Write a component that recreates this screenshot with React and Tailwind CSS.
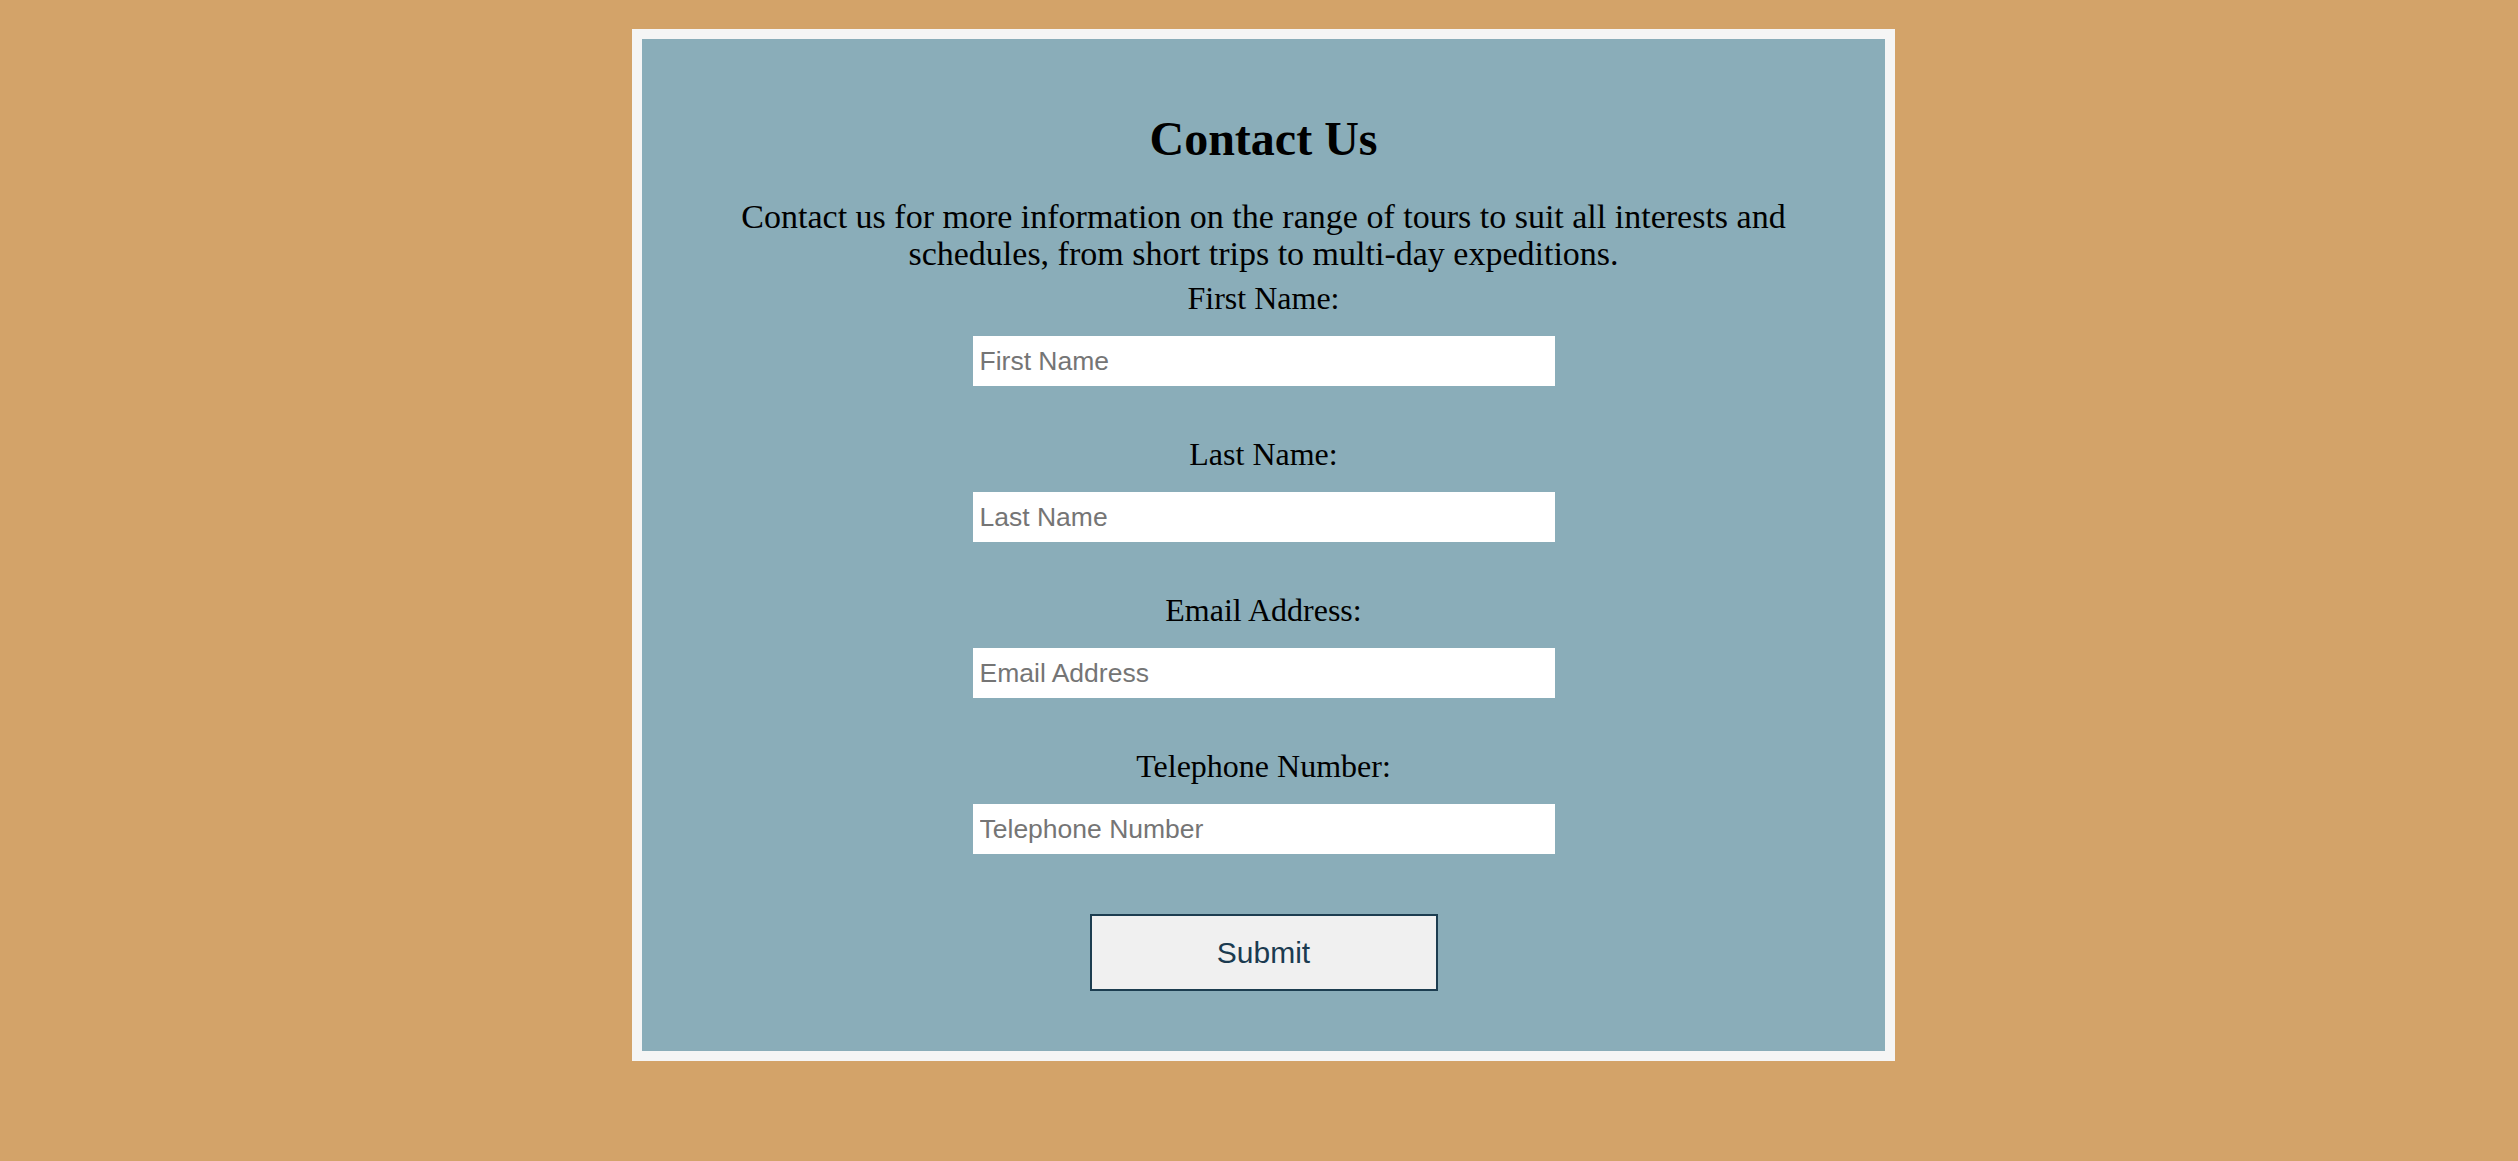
const FIELDS = [
  { label: 'First Name:', placeholder: 'First Name', type: 'text' },
  { label: 'Last Name:', placeholder: 'Last Name', type: 'text' },
  { label: 'Email Address:', placeholder: 'Email Address', type: 'email' },
  { label: 'Telephone Number:', placeholder: 'Telephone Number', type: 'tel' },
]

export default function App() {
  return (
    <div className="min-h-[1161px] w-full bg-[#d3a369] pt-[29px] pb-[100px]">
      <div className="ml-[632px] w-[1263px] border-[10px] border-[#f5f5f5] bg-[#8aadb9] px-[60px] pt-[72px] pb-[60px] text-black font-['Liberation_Serif',serif]">
        <h1 className="text-center text-[48px] leading-[56px] font-bold">Contact Us</h1>
        <p className="mt-[31px] text-center text-[34px] leading-[37px]">
          Contact us for more information on the range of tours to suit all interests and schedules, from short trips to multi-day expeditions.
        </p>

        <form className="mt-[8px] flex flex-col items-center" onSubmit={(e) => e.preventDefault()}>
          {FIELDS.map((f, i) => (
            <div key={f.label} className={`flex flex-col items-center ${i > 0 ? 'mt-[50px]' : ''}`}>
              <label className="text-[32px] leading-[37px]">{f.label}</label>
              <input
                type={f.type}
                placeholder={f.placeholder}
                className="mt-[19px] h-[50px] w-[582px] bg-white px-[7px] text-[26.5px] text-black font-['Liberation_Sans',Arial,sans-serif] placeholder:text-[#757575] outline-none"
              />
            </div>
          ))}

          <button
            type="submit"
            className="mt-[60px] h-[77px] w-[348px] border-2 border-[#1c3d50] bg-[#f0f0f0] text-[30px] text-[#1b3b50] font-['Liberation_Sans',Arial,sans-serif]"
          >
            Submit
          </button>
        </form>
      </div>
    </div>
  )
}
